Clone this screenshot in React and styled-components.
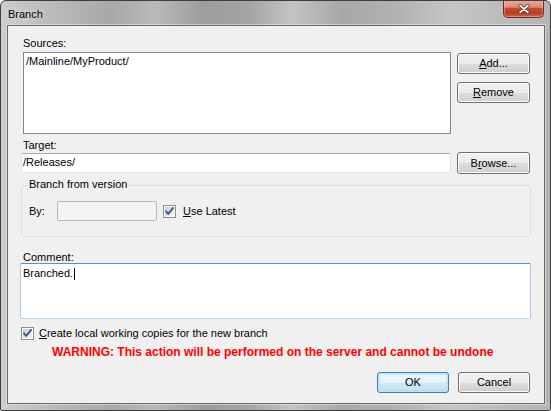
import React from "react";
import styled, { createGlobalStyle } from "styled-components";

const Global = createGlobalStyle`
  html, body { margin: 0; padding: 0; background: #ffffff; }
  body { font-family: "Liberation Sans", Arial, sans-serif; font-size: 11px; color: #000; }
  * { box-sizing: border-box; }
`;

const Window = styled.div`
  width: 551px;
  height: 411px;
  border: 1px solid #3e3e3e;
  border-radius: 6px 6px 2px 2px;
  background: linear-gradient(
    to right,
    #cdcdcd 0%,
    #bdbdbd 8%,
    #a8a8a8 20%,
    #b9b9b9 28%,
    #9d9d9d 37%,
    #a4a4a4 45%,
    #c3c3c3 53%,
    #a8a8a8 62%,
    #b1b1b1 72%,
    #c6c6c6 82%,
    #bcbcbc 91%,
    #b5b5b5 100%
  );
  display: flex;
  flex-direction: column;
  overflow: hidden;
`;

const TitleBar = styled.div`
  height: 24px;
  display: flex;
  align-items: flex-start;
  flex: none;
`;

const Title = styled.div`
  margin: 7px 0 0 7px;
  font-size: 11px;
  line-height: 13px;
  color: #000;
  text-shadow: 0 0 6px rgba(255, 255, 255, 0.8);
`;

const CloseButton = styled.div`
  margin: -1px 6px 0 auto;
  width: 41px;
  height: 18px;
  border: 1px solid #6b2b1f;
  border-top: none;
  border-radius: 0 0 5px 5px;
  background: linear-gradient(
    to bottom,
    #e9ab9c 0%,
    #dd8a76 42%,
    #c44c33 50%,
    #b83c24 78%,
    #d06a4f 100%
  );
  box-shadow: inset 0 0 0 1px rgba(255, 220, 210, 0.35);
  display: flex;
  align-items: center;
  justify-content: center;
`;

const Client = styled.div`
  flex: 1;
  margin: 0 5px 6px 6px;
  border: 1px solid #6a6a6a;
  box-shadow: 0 0 0 1px rgba(235, 235, 235, 0.55);
  background: #f0f0f0;
  padding: 11px 13px 0 12px;
  display: flex;
  flex-direction: column;
`;

const Label = styled.div`
  line-height: 13px;
  height: 13px;
  padding-left: 3px;
  margin-top: ${(p) => p.$mt || 0}px;
`;

const Row = styled.div`
  display: flex;
  align-items: ${(p) => p.$align || "center"};
  gap: 6px;
  margin-top: ${(p) => p.$mt || 0}px;
`;

const ListBox = styled.div`
  margin-left: 3px;
  width: 428px;
  height: 82px;
  flex: none;
  background: #fff;
  border: 1px solid #828790;
  padding: 2px 2px;
  line-height: 13px;
`;

const ButtonColumn = styled.div`
  display: flex;
  flex-direction: column;
  gap: 8px;
  padding-top: 1px;
`;

const Button = styled.div`
  width: ${(p) => p.$w || 73}px;
  height: ${(p) => p.$h || 21}px;
  flex: none;
  border: 1px solid ${(p) => (p.$default ? "#3c7fb1" : "#707070")};
  border-radius: 3px;
  background: ${(p) =>
    p.$default
      ? "linear-gradient(to bottom, #eef7fc 0%, #e4f1f9 50%, #d4e8f4 51%, #c6deee 100%)"
      : "linear-gradient(to bottom, #f2f2f2 0%, #ebebeb 50%, #dddddd 51%, #cfcfcf 100%)"};
  box-shadow: ${(p) =>
    p.$default
      ? "inset 0 0 0 1px #bfe7fb, inset 0 0 0 2px rgba(150, 215, 248, 0.45)"
      : "inset 0 0 0 1px #fcfcfc"};
  display: flex;
  align-items: center;
  justify-content: center;
  line-height: 13px;
  color: #000;
`;

const Key = styled.span`
  text-decoration: underline;
  text-underline-offset: 1px;
`;

const TextBox = styled.div`
  margin-left: ${(p) => p.$ml || 0}px;
  width: ${(p) => p.$w}px;
  height: 20px;
  flex: none;
  background: ${(p) => (p.$disabled ? "#f4f4f4" : "#fff")};
  border: 1px solid;
  border-color: ${(p) =>
    p.$disabled ? "#b4b7ba" : "#abadb3 #dbdfe6 #e3e9ef #e2e3ea"};
  border-radius: 2px;
  padding: 2px 1px;
  line-height: 13px;
  white-space: nowrap;
`;

const Group = styled.div`
  position: relative;
  margin: 11px 0 0 1px;
  width: 510px;
  height: 52px;
  border: 1px solid #d5dfe5;
  border-radius: 3px;
  padding: 15px 0 0 7px;
  display: flex;
  align-items: flex-start;
`;

const GroupTitle = styled.div`
  position: absolute;
  top: -8px;
  left: 6px;
  padding: 0 2px 0 1px;
  background: #f0f0f0;
  line-height: 13px;
`;

const GroupRow = styled.div`
  display: flex;
  align-items: center;
  height: 20px;
`;

const ByLabel = styled.div`
  width: 28px;
  line-height: 13px;
`;

const CheckLabel = styled.div`
  display: flex;
  align-items: center;
  gap: ${(p) => p.$gap || 6}px;
  margin-left: ${(p) => p.$ml || 0}px;
  line-height: 13px;
`;

const Comment = styled.div`
  margin-top: -1px;
  width: 511px;
  height: 56px;
  background: #fff;
  border: 1px solid;
  border-color: #5b91c1 #a9cbe5 #b7d7ec #a9cbe5;
  border-radius: 2px;
  padding: 3px 2px;
  line-height: 13px;
  display: flex;
  align-items: flex-start;
`;

const Caret = styled.span`
  display: inline-block;
  width: 1px;
  height: 12px;
  margin: 1px 0 0 1px;
  background: #000;
`;

const LocalRow = styled.div`
  margin-top: 8px;
`;

const Warning = styled.div`
  margin: 6px 0 0 32px;
  font-size: 12px;
  font-weight: bold;
  color: #f00;
  line-height: 13px;
  white-space: nowrap;
`;

const Footer = styled.div`
  margin-top: 13px;
  margin-right: 1px;
  display: flex;
  justify-content: flex-end;
  gap: 9px;
`;

const CheckBox = ({ checked = true }) => (
  <svg width="13" height="13" viewBox="0 0 13 13" style={{ flex: "none" }}>
    <defs>
      <linearGradient id="cbg" x1="0" y1="0" x2="1" y2="1">
        <stop offset="0" stopColor="#c5c9cf" />
        <stop offset="1" stopColor="#f7f7f7" />
      </linearGradient>
    </defs>
    <rect x="0.5" y="0.5" width="12" height="12" fill="#fff" stroke="#8e8f8f" />
    <rect x="2" y="2" width="9" height="9" fill="url(#cbg)" />
    {checked && (
      <path
        d="M3 6.3 L5.2 8.8 L10 3"
        fill="none"
        stroke="#3d4f94"
        strokeWidth="1.8"
        strokeLinecap="square"
      />
    )}
  </svg>
);

const CloseGlyph = () => (
  <svg width="12" height="10" viewBox="0 0 12 10">
    <path d="M2 1.5 L10 8.5 M10 1.5 L2 8.5" stroke="#5a2014" strokeWidth="3.4" strokeLinecap="round" />
    <path d="M2 1.5 L10 8.5 M10 1.5 L2 8.5" stroke="#ffffff" strokeWidth="1.8" strokeLinecap="round" />
  </svg>
);

export default function App() {
  return (
    <>
      <Global />
      <Window>
        <TitleBar>
          <Title>Branch</Title>
          <CloseButton>
            <CloseGlyph />
          </CloseButton>
        </TitleBar>
        <Client>
          <Label>Sources:</Label>
          <Row $align="flex-start" $mt={2}>
            <ListBox>/Mainline/MyProduct/</ListBox>
            <ButtonColumn>
              <Button>
                <span>
                  <Key>A</Key>dd...
                </span>
              </Button>
              <Button>
                <span>
                  <Key>R</Key>emove
                </span>
              </Button>
            </ButtonColumn>
          </Row>
          <Label $mt={5}>Target:</Label>
          <Row>
            <TextBox $ml={1} $w={430}>
              /Releases/
            </TextBox>
            <Button $h={22}>
              <span>
                B<Key>r</Key>owse...
              </span>
            </Button>
          </Row>
          <Group>
            <GroupTitle>Branch from version</GroupTitle>
            <GroupRow>
              <ByLabel>By:</ByLabel>
              <TextBox $w={100} $disabled />
              <CheckLabel $ml={6} $gap={7}>
                <CheckBox />
                <span>
                  <Key>U</Key>se Latest
                </span>
              </CheckLabel>
            </GroupRow>
          </Group>
          <Label $mt={14}>Comment:</Label>
          <Comment>
            Branched.
            <Caret />
          </Comment>
          <LocalRow>
            <CheckLabel $ml={1} $gap={5}>
              <CheckBox />
              <span>
                <Key>C</Key>reate local working copies for the new branch
              </span>
            </CheckLabel>
          </LocalRow>
          <Warning>
            WARNING: This action will be performed on the server and cannot be undone
          </Warning>
          <Footer>
            <Button $w={72} $default>
              OK
            </Button>
            <Button $w={72}>Cancel</Button>
          </Footer>
        </Client>
      </Window>
    </>
  );
}
